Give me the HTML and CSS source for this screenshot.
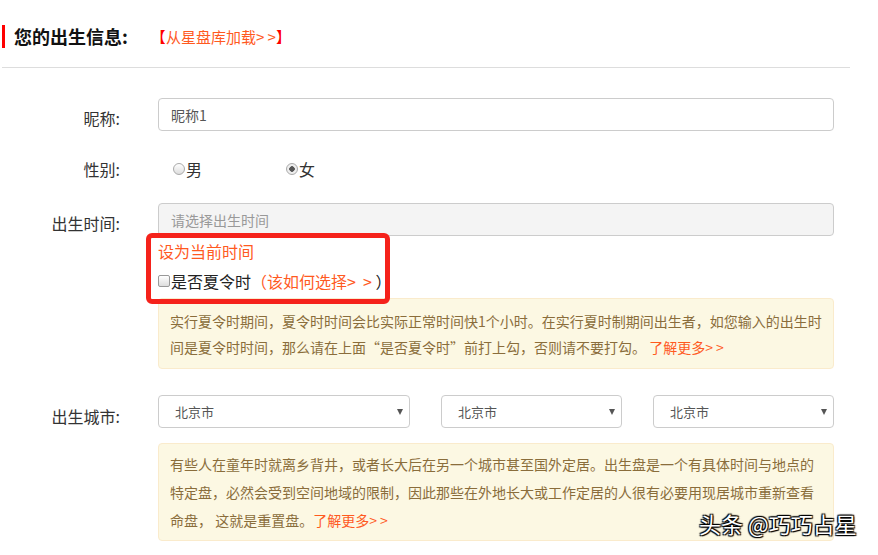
FILE: index.html
```html
<!DOCTYPE html>
<html lang="zh-CN">

<head>
	<meta charset="utf-8">
	<title>出生信息</title>
	<link rel="stylesheet" href="styles.css">
</head>

<body>
	<div class="page">
		<!-- Section title -->
		<div class="title-bar">
			<span class="title">您的出生信息:</span>
			<a class="load-link" href="#"><span class="bracket">【</span>从星盘库加载&gt; &gt;<span class="bracket">】</span></a>
		</div>
		<hr class="divider">

		<form class="form">
			<!-- Nickname -->
			<div class="form-row">
				<label class="form-label" for="nickname">昵称:</label>
				<div class="form-field">
					<input type="text" id="nickname" class="text-input" value="昵称1">
				</div>
			</div>

			<!-- Gender -->
			<div class="form-row row-gender">
				<span class="form-label">性别:</span>
				<div class="form-field radios">
					<label class="radio"><input type="radio" name="gender" value="M">男</label>
					<label class="radio"><input type="radio" name="gender" value="F" checked>女</label>
				</div>
			</div>

			<!-- Birth time -->
			<div class="form-row row-time">
				<label class="form-label" for="birth-time">出生时间:</label>
				<div class="form-field">
					<input type="text" id="birth-time" class="text-input input-disabled" placeholder="请选择出生时间" readonly>
					<a class="now-link" href="#">设为当前时间</a>
					<label class="dst">
						<input type="checkbox" name="dst">是否夏令时<a class="how-link" href="#">（该如何选择&gt;&nbsp;&nbsp;&gt;&nbsp;</a>）
					</label>
					<div class="notice notice-dst">
						实行夏令时期间，夏令时时间会比实际正常时间快1个小时。在实行夏时制期间出生者，如您输入的出生时间是夏令时时间，那么请在上面“是否夏令时”前打上勾，否则请不要打勾。
						<a class="more" href="#">了解更多&gt; &gt;</a>
					</div>
				</div>
			</div>

			<!-- Birth city -->
			<div class="form-row row-city">
				<span class="form-label">出生城市:</span>
				<div class="form-field">
					<div class="selects">
						<div class="select select-wide">
							<select><option>北京市</option></select>
						</div>
						<div class="select">
							<select><option>北京市</option></select>
						</div>
						<div class="select">
							<select><option>北京市</option></select>
						</div>
					</div>
					<div class="notice notice-city">
						有些人在童年时就离乡背井，或者长大后在另一个城市甚至国外定居。出生盘是一个有具体时间与地点的特定盘，必然会受到空间地域的限制，因此那些在外地长大或工作定居的人很有必要用现居城市重新查看命盘， 这就是重置盘。<a class="more" href="#">了解更多&gt; &gt;</a>
					</div>
				</div>
			</div>
		</form>
	</div>

	<!-- Annotation box drawn over the form -->
	<div class="highlight"></div>

	<!-- Watermark -->
	<div class="watermark">头条 @巧巧占星</div>
</body>

</html>
```

FILE: styles.css
```css
/* Base font and reset */
body {
	margin: 0;
	font-family: "Noto Sans CJK SC", "Noto Sans", sans-serif;
	color: #333;
	background: #fff;
	position: relative;
	height: 555px;
	overflow: hidden;
}

a {
	text-decoration: none;
}

.page {
	width: 848px;
	margin-left: 2px;
	padding-top: 25px;
}

/* Title bar with red marker */
.title-bar {
	display: flex;
	align-items: center;
	height: 23px;
	border-left: 3px solid #f00;
	padding-left: 9px;
}

.title {
	font-size: 18px;
	font-weight: bold;
	color: #111;
	line-height: 23px;
}

.load-link {
	margin-left: 23px;
	font-size: 15px;
	color: #ff5a1f;
	line-height: 23px;
}

.bracket {
	color: #f00;
}

.divider {
	border: 0;
	border-top: 1px solid #ddd;
	margin: 19px 0 0;
}

/* Form rows */
.form {
	padding-top: 30px;
}

.form-row {
	display: flex;
	align-items: flex-start;
}

.form-label {
	width: 118px;
	text-align: right;
	font-size: 16px;
	line-height: 24px;
	padding-top: 8px;
	color: #333;
}

.form-field {
	margin-left: 38px;
	width: 676px;
}

.text-input {
	display: block;
	box-sizing: border-box;
	width: 100%;
	height: 33px;
	padding: 0 12px;
	border: 1px solid #ccc;
	border-radius: 4px;
	font-family: inherit;
	font-size: 14px;
	color: #555;
	outline: none;
}

.input-disabled {
	background: #f4f4f4;
}

.input-disabled::placeholder {
	color: #999;
}

/* Gender radios */
.row-gender {
	margin-top: 23px;
}

.row-gender .form-label {
	line-height: 30px;
	padding-top: 0;
}

.radios {
	display: flex;
	height: 30px;
	align-items: center;
	padding-left: 15px;
	box-sizing: border-box;
}

.radio {
	display: flex;
	align-items: center;
	width: 113px;
	font-size: 16px;
	color: #333;
}

.radio input {
	appearance: none;
	width: 12px;
	height: 12px;
	margin: 0 1px 0 0;
	border: 1px solid #aaa;
	border-radius: 50%;
	background: linear-gradient(#fff, #ddd);
	box-sizing: border-box;
}

.radio input:checked {
	background: radial-gradient(circle, #555 0 2.5px, #eee 3px);
}

/* Birth time */
.row-time {
	margin-top: 19px;
}

.now-link {
	display: block;
	margin-top: 5px;
	font-size: 16px;
	line-height: 20px;
	color: #ff5a1f;
}

.dst {
	display: flex;
	align-items: center;
	margin-top: 10px;
	font-size: 16px;
	line-height: 20px;
	color: #222;
}

.dst input {
	appearance: none;
	width: 12px;
	height: 12px;
	margin: 0 1px 0 0;
	border: 1px solid #999;
	border-radius: 2px;
	background: linear-gradient(#fff, #ddd);
	box-sizing: border-box;
}

.how-link {
	color: #ff5a1f;
}

/* Yellow notices */
.notice {
	box-sizing: border-box;
	width: 676px;
	border: 1px solid #faebcc;
	border-radius: 4px;
	background: #fcf8e3;
	color: #8a6d3b;
	font-size: 14px;
	padding: 9px 6px 8px 11px;
	line-height: 26px;
}

.notice-dst {
	margin-top: 7px;
}

.notice-city {
	margin-top: 15px;
	padding-top: 6px;
	padding-bottom: 6px;
	line-height: 28px;
}

.more {
	color: #ff5a1f;
}

/* Birth city selects */
.row-city {
	margin-top: 26px;
}

.row-city .form-label {
	padding-top: 9px;
}

.selects {
	display: flex;
	gap: 31px;
}

.select {
	position: relative;
	width: 181px;
}

.select-wide {
	width: 252px;
}

.select select {
	appearance: none;
	box-sizing: border-box;
	width: 100%;
	height: 33px;
	padding: 0 16px;
	border: 1px solid #ccc;
	border-radius: 4px;
	background: #fff;
	font-family: inherit;
	font-size: 13px;
	color: #555;
}

/* Small dropdown arrow */
.select::after {
	content: "";
	position: absolute;
	right: 7px;
	top: 14px;
	border-left: 3px solid transparent;
	border-right: 3px solid transparent;
	border-top: 6px solid #555;
}

/* Red annotation frame */
.highlight {
	position: absolute;
	left: 146px;
	top: 233px;
	width: 244px;
	height: 71px;
	box-sizing: border-box;
	border: 5px solid #f5221b;
	border-radius: 6px;
}

.watermark {
	position: absolute;
	left: 699px;
	top: 506px;
	font-size: 22px;
	line-height: 34px;
	color: #fff;
	text-shadow: 0 0 1px #000, 1px 1px 1px #000, -1px -1px 1px #000, 1px -1px 1px #000, -1px 1px 1px #000;
}
```
